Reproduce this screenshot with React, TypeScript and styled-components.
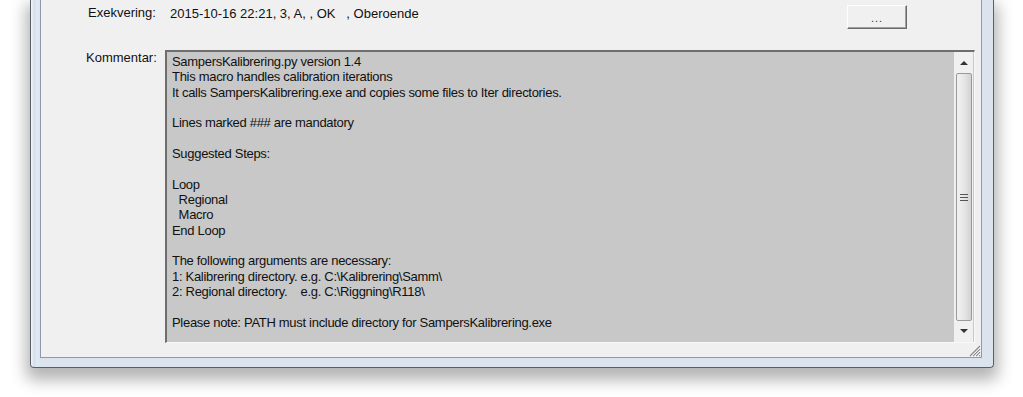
import React from "react";
import styled, { createGlobalStyle } from "styled-components";

const Global = createGlobalStyle`
  html, body { margin: 0; padding: 0; background: #ffffff; }
  body { font-family: "Liberation Sans", Arial, sans-serif; font-size: 13px; color: #000; }
`;

const Page = styled.div`
  width: 1023px;
  height: 397px;
  background: #fff;
  overflow: hidden;
  padding-left: 30px;
  box-sizing: border-box;
`;

const Frame = styled.div`
  width: 964px;
  height: 368px;
  box-sizing: border-box;
  border: 1px solid #5a5f66;
  border-top: none;
  border-radius: 0 0 4px 4px;
  background: linear-gradient(90deg, #f4f7fb 0px, #d5dfeb 3px, #e2e9f2 6px, #dbe4ee 9px);
  padding: 0 11px 9px 9px;
  box-shadow: 0 8px 16px 4px rgba(0, 0, 0, 0.3);
  display: flex;
`;

const Content = styled.div`
  flex: 1;
  position: relative;
  box-sizing: border-box;
  border: 1px solid #8d9aab;
  border-top: none;
  background: #f0f0f0;
  padding: 5px 0 0 0;
  display: flex;
  flex-direction: column;
`;

const Row = styled.div<{ $top?: number }>`
  display: flex;
  align-items: flex-start;
  margin-top: ${(p) => p.$top ?? 0}px;
`;

const Label = styled.div<{ $indent: number; $width: number; $dy: number }>`
  width: ${(p) => p.$width - p.$indent}px;
  padding-left: ${(p) => p.$indent}px;
  padding-top: ${(p) => p.$dy}px;
  flex-shrink: 0;
  color: #111;
  white-space: nowrap;
`;

const Value = styled.div`
  flex: 1;
  padding-top: 1px;
  white-space: pre;
  color: #111;
`;

const Button = styled.div`
  width: 60px;
  height: 24px;
  box-sizing: border-box;
  margin-right: 74px;
  border: 1px solid;
  border-color: #fdfdfd #6a6a6a #6a6a6a #fdfdfd;
  box-shadow: inset -1px -1px 0 #a0a0a0;
  background: #f0f0f0;
  display: flex;
  justify-content: center;
  align-items: flex-end;
  padding-bottom: 4px;
  font-size: 11px;
  color: #333;
  letter-spacing: 1px;
`;

const TextBox = styled.div`
  width: 810px;
  height: 293px;
  box-sizing: border-box;
  border-style: solid;
  border-width: 2px 1px 1px 2px;
  border-color: #6e6e6e #f8f8f8 #f8f8f8 #6e6e6e;
  background: #c8c8c8;
  display: flex;
`;

const TextArea = styled.div`
  flex: 1;
  padding: 2px 0 0 5px;
  line-height: 15.35px;
  white-space: pre;
  color: #111;
  letter-spacing: -0.3px;
`;

const ScrollBar = styled.div`
  width: 19px;
  margin: 0 1px 0 0;
  background: #f0f0f0;
  display: flex;
  flex-direction: column;
  align-items: center;
`;

const ArrowBtn = styled.div`
  height: 21px;
  width: 100%;
  display: flex;
  align-items: center;
  justify-content: center;
`;

const Thumb = styled.div`
  width: 16px;
  flex: 1;
  box-sizing: border-box;
  border: 1px solid #9a9a9a;
  border-radius: 2px;
  background: linear-gradient(90deg, #f2f2f2 0%, #e6e6e6 50%, #d2d2d2 100%);
  display: flex;
  align-items: center;
  justify-content: center;
`;

const Grip = styled.svg`
  position: absolute;
  right: 0;
  bottom: 0;
`;

const lines = [
  "SampersKalibrering.py version 1.4",
  "This macro handles calibration iterations",
  "It calls SampersKalibrering.exe and copies some files to Iter directories.",
  "",
  "Lines marked ### are mandatory",
  "",
  "Suggested Steps:",
  "",
  "Loop",
  "  Regional",
  "  Macro",
  "End Loop",
  "",
  "The following arguments are necessary:",
  "1: Kalibrering directory. e.g. C:\\Kalibrering\\Samm\\",
  "2: Regional directory.    e.g. C:\\Riggning\\R118\\",
  "",
  "Please note: PATH must include directory for SampersKalibrering.exe",
];

export default function App() {
  return (
    <>
      <Global />
      <Page>
        <Frame>
          <Content>
            <Row>
              <Label $indent={47} $width={129} $dy={0}>Exekvering:</Label>
              <Value>2015-10-16 22:21, 3, A, , OK   , Oberoende</Value>
              <Button>...</Button>
            </Row>
            <Row $top={21}>
              <Label $indent={45} $width={124} $dy={0}>Kommentar:</Label>
              <TextBox>
                <TextArea>{lines.join("\n")}</TextArea>
                <ScrollBar>
                  <ArrowBtn>
                    <svg width="8" height="5" viewBox="0 0 8 5">
                      <path d="M0 5 L4 1 L8 5 Z" fill="#333" />
                    </svg>
                  </ArrowBtn>
                  <Thumb>
                    <svg width="8" height="7" viewBox="0 0 8 7">
                      <rect x="0" y="0" width="8" height="1" fill="#555" />
                      <rect x="0" y="3" width="8" height="1" fill="#555" />
                      <rect x="0" y="6" width="8" height="1" fill="#555" />
                    </svg>
                  </Thumb>
                  <ArrowBtn>
                    <svg width="8" height="5" viewBox="0 0 8 5">
                      <path d="M0 0 L4 4 L8 0 Z" fill="#333" />
                    </svg>
                  </ArrowBtn>
                </ScrollBar>
              </TextBox>
            </Row>
            <Grip width="13" height="13" viewBox="0 0 13 13">
              <path d="M12 2 L2 12 M12 5 L5 12 M12 8 L8 12 M12 11 L11 12" stroke="#8a8a8a" strokeWidth="1.2" />
              <path d="M13 3 L3 13 M13 6 L6 13 M13 9 L9 13" stroke="#ffffff" strokeWidth="0.8" />
            </Grip>
          </Content>
        </Frame>
      </Page>
    </>
  );
}
